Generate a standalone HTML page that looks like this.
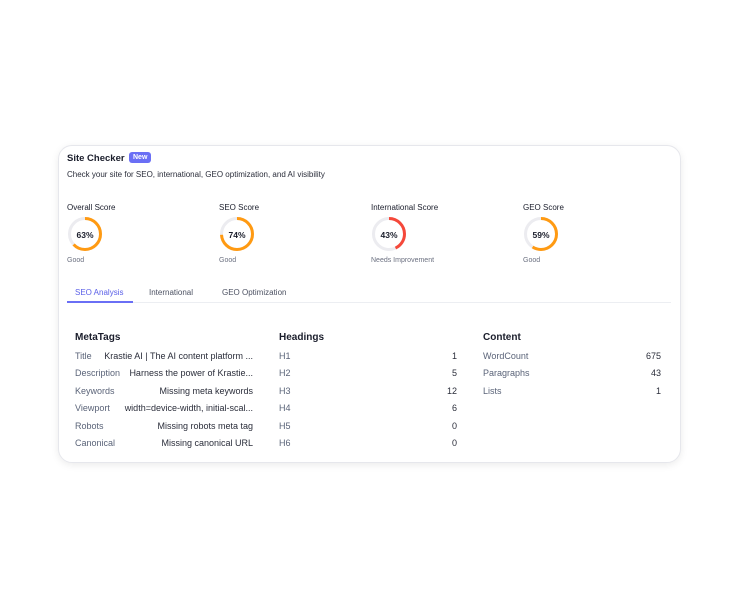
<!DOCTYPE html>
<html><head><style>
*{margin:0;padding:0;box-sizing:border-box}
body{width:738px;height:607px;background:#fff;font-family:"Liberation Sans",sans-serif;position:relative;overflow:hidden;color:#1a1d2b}
.card{position:absolute;left:58px;top:145px;width:623px;height:318px;border:1px solid #e6e7ec;border-radius:14px;box-shadow:0 2px 8px rgba(0,0,0,.08)}
.a{position:absolute;white-space:nowrap}
.t{font-size:9.5px;font-weight:bold;left:8px;top:7px}
.new{left:70px;top:6px;background:#6a6ff5;color:#fff;font-size:7px;font-weight:bold;padding:2px 4px;border-radius:3px}
.sub{font-size:8px;left:8px;top:24px;color:#2a2d3a}
.lab{font-size:8px;top:57px}
.st{font-size:7px;color:#6b7080;top:111px}
svg{position:absolute;top:70px}
.pct{font-size:8.5px;font-weight:bold;top:84px;width:34px;text-align:center}
.tab{font-size:8px;top:142px;color:#4d5263}
.line{left:8px;top:156px;width:604px;height:1px;background:#eceef2}
.ind{left:8px;top:155px;width:66px;height:2px;background:#6a6ff5}
.h{font-size:10px;font-weight:bold;top:186px}
.r{font-size:9px;width:178px;display:flex;justify-content:space-between}
.r span:first-child{color:#5a6378}
.r span:last-child{color:#2a2d3a}
</style></head><body>
<div class="card">
<div class="a t">Site Checker</div><div class="a new">New</div>
<div class="a sub">Check your site for SEO, international, GEO optimization, and AI visibility</div>

<div class="a lab" style="left:8px">Overall Score</div>
<svg style="left:8px" width="36" height="36"><circle cx="18" cy="18" r="15.5" fill="none" stroke="#ececf0" stroke-width="3"/><circle cx="18" cy="18" r="15.5" fill="none" stroke="#ff9a12" stroke-width="3" stroke-dasharray="61.4 97.4" transform="rotate(-90 18 18)"/></svg>
<div class="a pct" style="left:9px">63%</div>
<div class="a st" style="left:8px">Good</div>

<div class="a lab" style="left:160px">SEO Score</div>
<svg style="left:160px" width="36" height="36"><circle cx="18" cy="18" r="15.5" fill="none" stroke="#ececf0" stroke-width="3"/><circle cx="18" cy="18" r="15.5" fill="none" stroke="#ff9a12" stroke-width="3" stroke-dasharray="72.1 97.4" transform="rotate(-90 18 18)"/></svg>
<div class="a pct" style="left:161px">74%</div>
<div class="a st" style="left:160px">Good</div>

<div class="a lab" style="left:312px">International Score</div>
<svg style="left:312px" width="36" height="36"><circle cx="18" cy="18" r="15.5" fill="none" stroke="#ececf0" stroke-width="3"/><circle cx="18" cy="18" r="15.5" fill="none" stroke="#f5483a" stroke-width="3" stroke-dasharray="41.9 97.4" transform="rotate(-90 18 18)"/></svg>
<div class="a pct" style="left:313px">43%</div>
<div class="a st" style="left:312px">Needs Improvement</div>

<div class="a lab" style="left:464px">GEO Score</div>
<svg style="left:464px" width="36" height="36"><circle cx="18" cy="18" r="15.5" fill="none" stroke="#ececf0" stroke-width="3"/><circle cx="18" cy="18" r="15.5" fill="none" stroke="#ff9a12" stroke-width="3" stroke-dasharray="57.5 97.4" transform="rotate(-90 18 18)"/></svg>
<div class="a pct" style="left:465px">59%</div>
<div class="a st" style="left:464px">Good</div>

<div class="a tab" style="left:16px;color:#5b60e8">SEO Analysis</div>
<div class="a tab" style="left:90px">International</div>
<div class="a tab" style="left:163px">GEO Optimization</div>
<div class="a line"></div><div class="a ind"></div>

<div class="a h" style="left:16px">MetaTags</div>
<div class="a h" style="left:220px">Headings</div>
<div class="a h" style="left:424px">Content</div>

<div class="a r" style="left:16px;top:205px"><span>Title</span><span>Krastie AI | The AI content platform ...</span></div>
<div class="a r" style="left:16px;top:222px"><span>Description</span><span>Harness the power of Krastie...</span></div>
<div class="a r" style="left:16px;top:240px"><span>Keywords</span><span>Missing meta keywords</span></div>
<div class="a r" style="left:16px;top:257px"><span>Viewport</span><span>width=device-width, initial-scal...</span></div>
<div class="a r" style="left:16px;top:275px"><span>Robots</span><span>Missing robots meta tag</span></div>
<div class="a r" style="left:16px;top:292px"><span>Canonical</span><span>Missing canonical URL</span></div>

<div class="a r" style="left:220px;top:205px"><span>H1</span><span>1</span></div>
<div class="a r" style="left:220px;top:222px"><span>H2</span><span>5</span></div>
<div class="a r" style="left:220px;top:240px"><span>H3</span><span>12</span></div>
<div class="a r" style="left:220px;top:257px"><span>H4</span><span>6</span></div>
<div class="a r" style="left:220px;top:275px"><span>H5</span><span>0</span></div>
<div class="a r" style="left:220px;top:292px"><span>H6</span><span>0</span></div>

<div class="a r" style="left:424px;top:205px"><span>WordCount</span><span>675</span></div>
<div class="a r" style="left:424px;top:222px"><span>Paragraphs</span><span>43</span></div>
<div class="a r" style="left:424px;top:240px"><span>Lists</span><span>1</span></div>
</div>
</body></html>
